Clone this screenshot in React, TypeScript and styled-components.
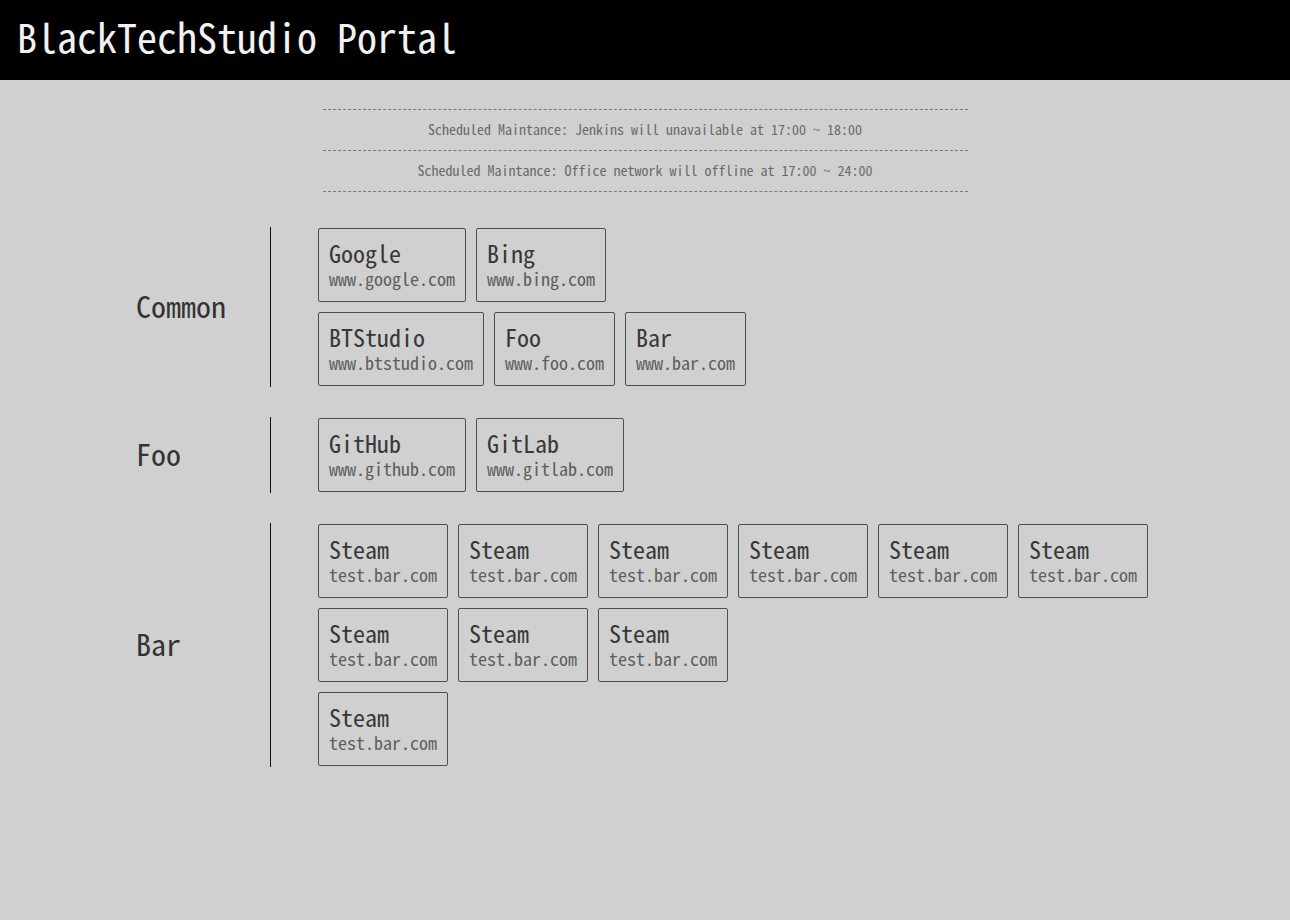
import React from "react";
import styled, { createGlobalStyle } from "styled-components";

const FONT = "'Noto Sans Mono CJK SC', 'Liberation Mono', monospace";

const GlobalStyle = createGlobalStyle`
  html, body {
    margin: 0;
    padding: 0;
    background: #d0d0d0;
    font-family: ${FONT};
  }
`;

const Page = styled.div`
  min-height: 920px;
  background: #d0d0d0;
`;

const Header = styled.header`
  height: 80px;
  background: #000;
  display: flex;
  align-items: center;
  padding: 0 0 8px 17px;
  box-sizing: border-box;
`;

const Title = styled.h1`
  margin: 0;
  font-family: ${FONT};
  font-weight: 400;
  font-size: 40px;
  line-height: 72px;
  color: #f2f2f2;
`;

const Notices = styled.section`
  width: 50%;
  margin: 29px auto 0;
  border-bottom: 1px dashed #7a7a7a;
`;

const Notice = styled.div`
  border-top: 1px dashed #7a7a7a;
  height: 38px;
  line-height: 38px;
  padding-bottom: 2px;
  text-align: center;
  font-size: 14px;
  color: #6a6a6a;
`;

const Groups = styled.main`
  display: flex;
  flex-direction: column;
  gap: 30px;
  padding: 35px 0 0 136px;
`;

const Group = styled.section`
  display: flex;
  align-items: stretch;
`;

const Label = styled.div`
  width: 134px;
  display: flex;
  align-items: center;
  padding-bottom: 4px;
  box-sizing: border-box;
  font-size: 30px;
  color: #333;
`;

const Links = styled.div`
  border-left: 1px solid #111;
  padding: 1px 0 1px 47px;
  display: flex;
  flex-direction: column;
  gap: 10px;
`;

const Row = styled.div`
  display: flex;
  gap: 10px;
`;

const Card = styled.a`
  display: flex;
  flex-direction: column;
  box-sizing: border-box;
  height: 74px;
  padding: 8px 10px 13px;
  border: 1px solid #4f4f4f;
  border-radius: 2px;
  text-decoration: none;
  white-space: nowrap;
`;

const CardTitle = styled.span`
  font-size: 24px;
  line-height: 31px;
  color: #383838;
`;

const CardUrl = styled.span`
  font-size: 18px;
  line-height: 20px;
  color: #5e5e5e;
`;

type Link = { name: string; url: string };

const steam: Link = { name: "Steam", url: "test.bar.com" };

const groups: { label: string; rows: Link[][] }[] = [
  {
    label: "Common",
    rows: [
      [
        { name: "Google", url: "www.google.com" },
        { name: "Bing", url: "www.bing.com" },
      ],
      [
        { name: "BTStudio", url: "www.btstudio.com" },
        { name: "Foo", url: "www.foo.com" },
        { name: "Bar", url: "www.bar.com" },
      ],
    ],
  },
  {
    label: "Foo",
    rows: [
      [
        { name: "GitHub", url: "www.github.com" },
        { name: "GitLab", url: "www.gitlab.com" },
      ],
    ],
  },
  {
    label: "Bar",
    rows: [Array(6).fill(steam), Array(3).fill(steam), [steam]],
  },
];

const notices = [
  "Scheduled Maintance: Jenkins will unavailable at 17:00 ~ 18:00",
  "Scheduled Maintance: Office network will offline at 17:00 ~ 24:00",
];

export default function App() {
  return (
    <Page>
      <GlobalStyle />
      <Header>
        <Title>BlackTechStudio Portal</Title>
      </Header>
      <Notices>
        {notices.map((n) => (
          <Notice key={n}>{n}</Notice>
        ))}
      </Notices>
      <Groups>
        {groups.map((g) => (
          <Group key={g.label}>
            <Label>{g.label}</Label>
            <Links>
              {g.rows.map((row, ri) => (
                <Row key={ri}>
                  {row.map((l, li) => (
                    <Card key={li} href={`http://${l.url}`}>
                      <CardTitle>{l.name}</CardTitle>
                      <CardUrl>{l.url}</CardUrl>
                    </Card>
                  ))}
                </Row>
              ))}
            </Links>
          </Group>
        ))}
      </Groups>
    </Page>
  );
}
